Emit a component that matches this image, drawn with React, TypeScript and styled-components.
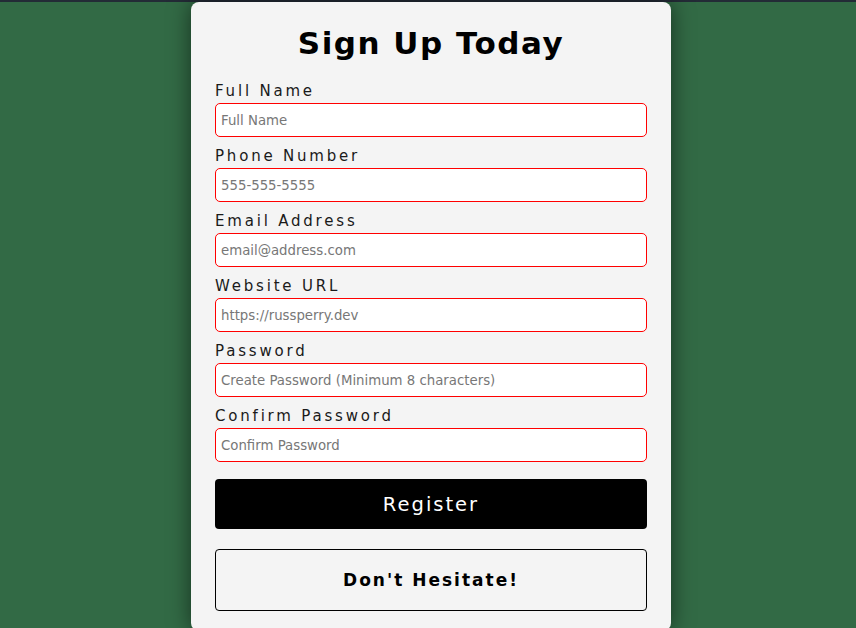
import React from "react";
import styled, { createGlobalStyle } from "styled-components";

const Global = createGlobalStyle`
  html, body { margin: 0; padding: 0; }
  body {
    background: #326a45;
    font-family: "DejaVu Sans", "Noto Sans", sans-serif;
    overflow: hidden;
  }
`;

const Page = styled.div`
  border-top: 2px solid #232b36;
  min-height: 626px;
  display: flex;
  justify-content: center;
  padding-left: 6px;
  box-sizing: border-box;
`;

const Card = styled.form`
  width: 480px;
  box-sizing: border-box;
  background: #f4f4f4;
  border-radius: 8px;
  box-shadow: 0 0 22px rgba(0, 0, 0, 0.55);
  padding: 21px 24px 20px;
  display: flex;
  flex-direction: column;
`;

const Title = styled.h1`
  margin: 0 0 18px;
  font-size: 31px;
  line-height: 40px;
  font-weight: 700;
  letter-spacing: 1.5px;
  text-align: center;
  color: #000;
`;

const Field = styled.div`
  display: flex;
  flex-direction: column;
  gap: 2px;
  margin-bottom: 9px;
`;

const Label = styled.label`
  font-size: 15px;
  line-height: 20px;
  letter-spacing: 2.8px;
  color: #1a1a1a;
  font-weight: 400;
`;

const Input = styled.input`
  box-sizing: border-box;
  height: 34px;
  width: 100%;
  border: 1px solid #ff0000;
  border-radius: 5px;
  background: #fff;
  padding: 0 5px;
  font-family: inherit;
  font-size: 13.3px;
  outline: none;
  &::placeholder { color: #777; }
`;

const Button = styled.button<{ $variant: "solid" | "outline" }>`
  box-sizing: border-box;
  width: 100%;
  border-radius: 4px;
  font-family: inherit;
  cursor: pointer;
  ${({ $variant }) =>
    $variant === "solid"
      ? `
    margin-top: 8px;
    height: 50px;
    background: #000;
    color: #fff;
    border: none;
    font-size: 19.5px;
    letter-spacing: 2px;
    font-weight: 400;
  `
      : `
    margin-top: 20px;
    height: 62px;
    background: transparent;
    color: #000;
    border: 1px solid #000;
    font-size: 17px;
    letter-spacing: 2px;
    font-weight: 700;
  `}
`;

const fields = [
  { label: "Full Name", placeholder: "Full Name", type: "text" },
  { label: "Phone Number", placeholder: "555-555-5555", type: "tel" },
  { label: "Email Address", placeholder: "email@address.com", type: "email" },
  { label: "Website URL", placeholder: "https://russperry.dev", type: "url" },
  { label: "Password", placeholder: "Create Password (Minimum 8 characters)", type: "password" },
  { label: "Confirm Password", placeholder: "Confirm Password", type: "password" },
];

export default function App() {
  return (
    <>
      <Global />
      <Page>
        <Card onSubmit={(e) => e.preventDefault()}>
          <Title>Sign Up Today</Title>
          {fields.map((f, i) => (
            <Field key={f.label}>
              <Label htmlFor={`f${i}`}>{f.label}</Label>
              <Input id={`f${i}`} type={f.type} placeholder={f.placeholder} />
            </Field>
          ))}
          <Button type="submit" $variant="solid">Register</Button>
          <Button type="button" $variant="outline">Don't Hesitate!</Button>
        </Card>
      </Page>
    </>
  );
}
